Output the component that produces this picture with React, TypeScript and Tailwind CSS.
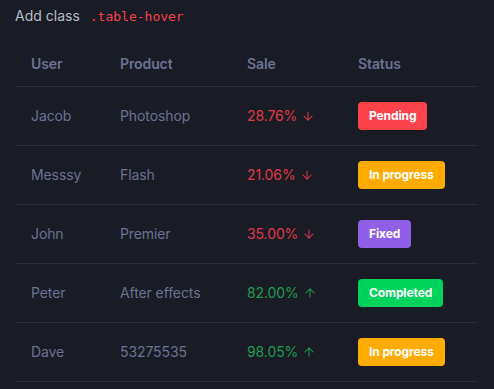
import { ArrowDown, ArrowUp } from "lucide-react";

type Row = {
  user: string;
  product: string;
  sale: string;
  up: boolean;
  status: string;
  badge: string;
};

const rows: Row[] = [
  { user: "Jacob", product: "Photoshop", sale: "28.76%", up: false, status: "Pending", badge: "bg-[#fc424a]" },
  { user: "Messsy", product: "Flash", sale: "21.06%", up: false, status: "In progress", badge: "bg-[#ffab00]" },
  { user: "John", product: "Premier", sale: "35.00%", up: false, status: "Fixed", badge: "bg-[#8f5fe8]" },
  { user: "Peter", product: "After effects", sale: "82.00%", up: true, status: "Completed", badge: "bg-[#00d25b]" },
  { user: "Dave", product: "53275535", sale: "98.05%", up: true, status: "In progress", badge: "bg-[#ffab00]" },
];

export default function App() {
  return (
    <div className="w-[494px] h-[389px] bg-[#191c24] pl-[15px] pr-[16px] pt-[6px] font-['Inter',sans-serif] overflow-hidden">
      <p className="text-[14px] text-[#b8bcc8] leading-[20px] flex items-baseline">
        Add class
        <code className="ml-[10px] text-[13px] text-[#fc424a] font-['DejaVu_Sans_Mono',monospace]">.table-hover</code>
      </p>

      <table className="w-full mt-[14px] border-collapse text-[14px] tracking-[-0.1px]">
        <thead>
          <tr className="border-b border-[#2c2e33] text-left text-[#6c7293]">
            <th className="pl-[16px] w-[105px] h-[45px] font-semibold">User</th>
            <th className="w-[127px] font-semibold">Product</th>
            <th className="w-[111px] font-semibold">Sale</th>
            <th className="font-semibold">Status</th>
          </tr>
        </thead>
        <tbody>
          {rows.map((r) => (
            <tr key={r.user} className="border-b border-[#2c2e33] text-[#6c7293]">
              <td className="pl-[16px] h-[59px]">{r.user}</td>
              <td>{r.product}</td>
              <td>
                <span className={`inline-flex items-center gap-[4px] ${r.up ? "text-[#1f9e50]" : "text-[#e0394a]"}`}>
                  {r.sale}
                  {r.up ? <ArrowUp size={14} strokeWidth={1.75} /> : <ArrowDown size={14} strokeWidth={1.75} />}
                </span>
              </td>
              <td>
                <span className={`inline-flex items-center h-[28px] px-[11px] rounded-[4px] text-white text-[12px] font-bold ${r.badge}`}>
                  {r.status}
                </span>
              </td>
            </tr>
          ))}
        </tbody>
      </table>
    </div>
  );
}
